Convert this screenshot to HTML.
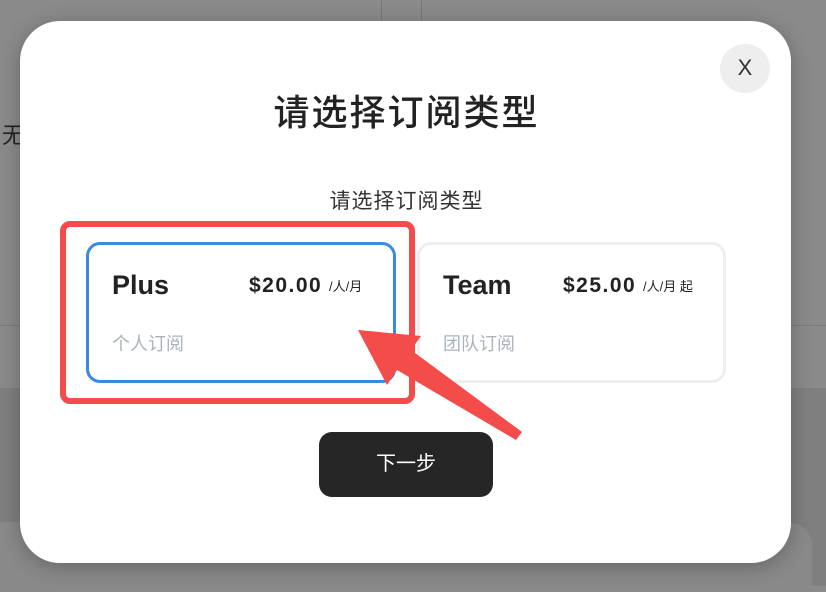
<!DOCTYPE html>
<html><head><meta charset="utf-8"><style>
*{margin:0;padding:0;box-sizing:border-box}
body{width:826px;height:586px;overflow:hidden;background:#8a8a8a;position:relative;font-family:"Liberation Sans","Noto Sans CJK SC",sans-serif}
.abs{position:absolute}
.modal{left:20px;top:21px;width:771px;height:542px;background:#fff;border-radius:40px;box-shadow:0 4px 20px rgba(0,0,0,.25)}
</style></head><body>
<div class="abs" style="left:0;top:388px;width:826px;height:198px;background:#7f7f7f"></div>
<div class="abs" style="left:0;top:522px;width:812px;height:70px;background:#898989;border-radius:0 24px 0 0"></div>
<div class="abs" style="left:381px;top:0;width:1px;height:30px;background:#777"></div>
<div class="abs" style="left:421px;top:0;width:1px;height:30px;background:#777"></div>
<div class="abs" style="left:0;top:325px;width:826px;height:1px;background:#7a7a7a"></div>
<div class="abs" style="left:2px;top:118px;font-size:22px;color:#222">无</div>
<div class="abs modal"></div>
<div class="abs" style="left:720px;top:44px;width:50px;height:49px;border-radius:50%;background:#eee;text-align:center;line-height:48px;font-size:22px;color:#333">X</div>
<div class="abs" style="left:0;top:84px;width:813px;text-align:center;font-size:36px;font-weight:500;color:#222;letter-spacing:2px">请选择订阅类型</div>
<div class="abs" style="left:0;top:185px;width:813px;text-align:center;font-size:21px;color:#333;letter-spacing:1px">请选择订阅类型</div>
<div class="abs" style="left:60px;top:221px;width:355px;height:183px;border:6px solid #f34c4a;border-radius:10px"></div>
<div class="abs" style="left:86px;top:242px;width:310px;height:141px;border:3px solid #3a8ae0;border-radius:14px"></div>
<div class="abs" style="left:417px;top:242px;width:309px;height:141px;border:3px solid #eee;border-radius:14px"></div>
<div class="abs" style="left:112px;top:270px;font-size:27px;font-weight:bold;color:#222;-webkit-text-stroke:0;">Plus</div>
<div class="abs" style="left:249px;top:274px;font-size:21px;font-weight:bold;color:#222;letter-spacing:1.5px">$20.00</div>
<div class="abs" style="left:329px;top:276px;font-size:13px;color:#222">/人/月</div>
<div class="abs" style="left:112px;top:330px;font-size:18px;color:#a9b3be">个人订阅</div>
<div class="abs" style="left:443px;top:270px;font-size:27px;font-weight:bold;color:#222">Team</div>
<div class="abs" style="left:563px;top:274px;font-size:21px;font-weight:bold;color:#222;letter-spacing:1.5px">$25.00</div>
<div class="abs" style="left:643px;top:276px;font-size:13px;color:#222">/人/月 起</div>
<div class="abs" style="left:443px;top:330px;font-size:18px;color:#a9b3be">团队订阅</div>
<svg class="abs" style="left:0;top:0" width="826" height="586"><polygon fill="#f34c4a" points="358,330 421,336 411,350 522,432 516,440 397,370 387,385"/></svg>
<div class="abs" style="left:319px;top:432px;width:174px;height:65px;background:#262626;border-radius:13px;color:#fff;font-size:20px;text-align:center;line-height:65px">下一步</div>
</body></html>
